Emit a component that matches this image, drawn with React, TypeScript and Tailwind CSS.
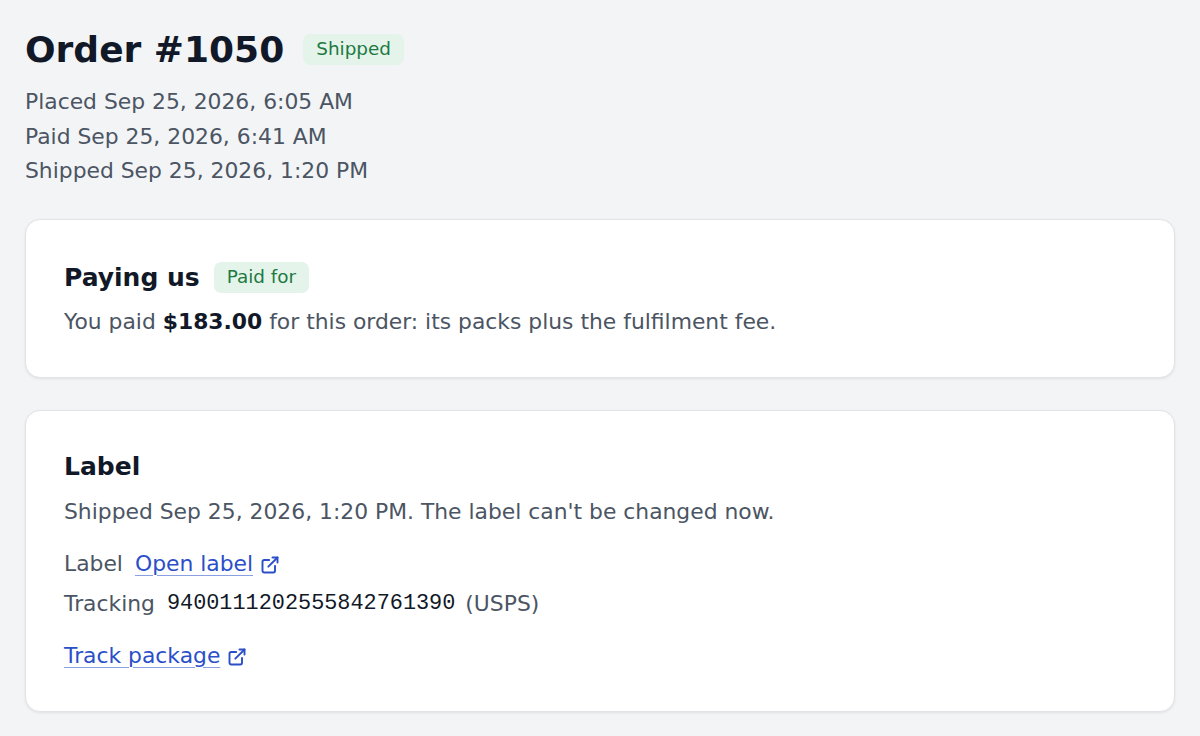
import { ExternalLink } from 'lucide-react';

const sans = { fontFamily: '"DejaVu Sans", sans-serif' };

const Badge = ({ children }: { children: string }) => (
    <span className="inline-flex items-center h-[31px] px-[13px] rounded-[7px] bg-[#e5f4ea] text-[#1d7a43] text-[18.4px] leading-none">
        {children}
    </span>
);

const Card = ({ children }: { children: React.ReactNode }) => (
    <section className="bg-white border border-[#e1e3e7] rounded-[15px] shadow-[0_1px_3px_rgba(0,0,0,0.08)] px-[38px] pt-[40px] pb-[38px]">
        {children}
    </section>
);

const LinkOut = ({ children }: { children: string }) => (
    <a href="#" className="flex items-center gap-[7px] text-[#2a4fc8]">
        <span className="underline decoration-1 underline-offset-[4px] decoration-[#8aa0e3]">{children}</span>
        <ExternalLink className="w-[20px] h-[20px] mt-[2px]" strokeWidth={2.3} />
    </a>
);

export default function App() {
    return (
        <div className="min-h-screen bg-[#f3f4f6] px-[25px] pt-[28px] pb-[26px] text-[21.85px] leading-[34.5px] text-[#4b5563]" style={sans}>
            <header className="mb-[30px]">
                <div className="flex items-center gap-[19px]">
                    <h1 className="text-[36px] leading-[43px] font-bold text-[#111827]">Order #1050</h1>
                    <Badge>Shipped</Badge>
                </div>
                <div className="mt-[14px]">
                    <p>Placed Sep 25, 2026, 6:05 AM</p>
                    <p>Paid Sep 25, 2026, 6:41 AM</p>
                    <p>Shipped Sep 25, 2026, 1:20 PM</p>
                </div>
            </header>

            <div className="flex flex-col gap-[32px]">
                <Card>
                    <div className="flex items-center gap-[14px] h-[36px]">
                        <h2 className="text-[25px] leading-[32px] font-bold text-[#111827]">Paying us</h2>
                        <Badge>Paid for</Badge>
                    </div>
                    <p className="mt-[9px]">
                        You paid <strong className="font-bold text-[#111827]">$183.00</strong> for this order: its packs plus the fulfilment fee.
                    </p>
                </Card>

                <Card>
                    <h2 className="text-[25px] leading-[32px] font-bold text-[#111827]">Label</h2>
                    <p className="mt-[12px]">Shipped Sep 25, 2026, 1:20 PM. The label can't be changed now.</p>
                    <div className="mt-[17px] flex flex-col gap-[6px]">
                        <div className="flex items-center gap-[12px]">
                            <span>Label</span>
                            <LinkOut>Open label</LinkOut>
                        </div>
                        <div className="flex items-center gap-[12px]">
                            <span>Tracking</span>
                            <span className="flex items-center gap-[10px]">
                                <span className="text-[#111827]" style={{ fontFamily: '"Liberation Mono", monospace' }}>9400111202555842761390</span>
                                <span>(USPS)</span>
                            </span>
                        </div>
                    </div>
                    <div className="mt-[17px] flex">
                        <LinkOut>Track package</LinkOut>
                    </div>
                </Card>
            </div>
        </div>
    );
}
